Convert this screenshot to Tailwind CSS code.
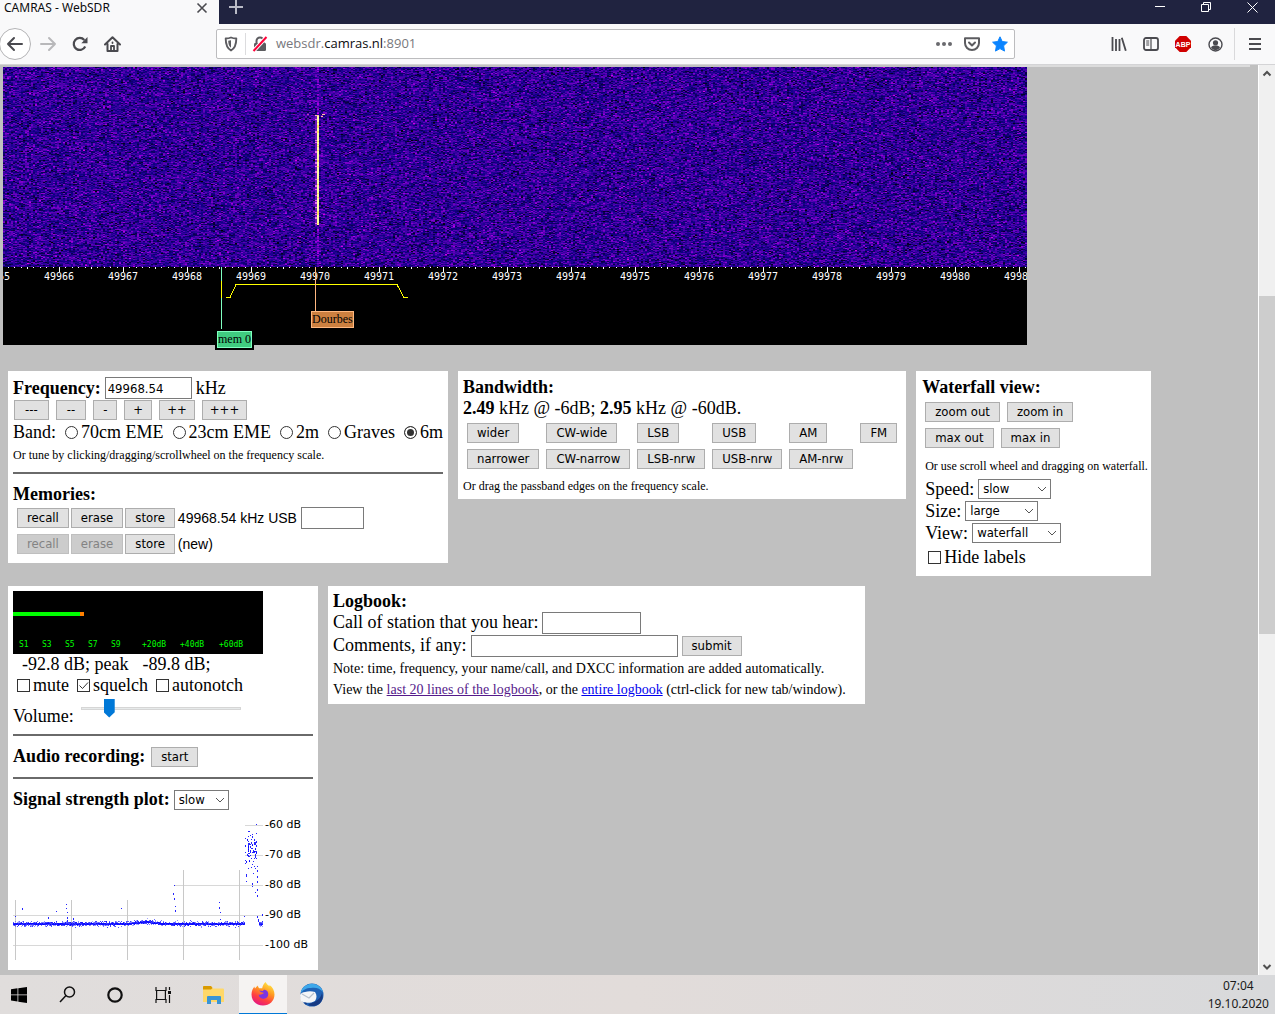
<!DOCTYPE html>
<html lang="en">
<head>
  <meta charset="UTF-8" />
  <title>CAMRAS - WebSDR</title>
  <meta name="viewport" content="width=device-width,initial-scale=1" />
  <script src="https://cdn.jsdelivr.net/npm/@tailwindcss/browser@4"></script>
</head>

<body class="h-screen flex flex-col overflow-hidden bg-[#c0c0c0] text-black
             font-['Open_Sans','Noto_Sans',sans-serif]">

  <!-- tab strip -->
  <header class="h-6 shrink-0 flex bg-[#202340] text-xs">
    <div class="w-[219px] bg-[#f9f9fa] flex items-center justify-between pl-1 pr-[11px] pb-2">
      <span class="text-[#0c0c0d] font-['Noto_Sans',sans-serif]">CAMRAS - WebSDR</span>
      <button aria-label="Close tab">
        <svg width="12" height="12" viewBox="0 0 12 12" fill="none" stroke="#4a4a4f" stroke-width="1.6"><path d="M1.5 1.5l9 9M10.5 1.5l-9 9"/></svg>
      </button>
    </div>
    <button class="w-[34px] flex justify-center" aria-label="New tab">
      <svg width="14" height="14" viewBox="0 0 14 14" stroke="#b9bac6" stroke-width="2"><path d="M7 0v14M0 7h14"/></svg>
    </button>
    <div class="ml-auto flex pb-[10px] text-white">
      <button class="w-[46px] flex items-center justify-center" aria-label="Minimize">
        <svg width="10" height="10" stroke="currentColor"><path d="M0 4.5h10"/></svg>
      </button>
      <button class="w-[46px] flex items-center justify-center" aria-label="Restore">
        <svg width="10" height="10" fill="none" stroke="currentColor"><path d="M.5 2.5h7v7h-7zM2.5 2.500v-2h7v7h-2"/></svg>
      </button>
      <button class="w-[46px] flex items-center justify-center" aria-label="Close">
        <svg width="11" height="11" stroke="currentColor"><path d="M.5.5l10 10M10.500.5l-10 10"/></svg>
      </button>
    </div>
  </header>

  <!-- toolbar -->
  <nav class="h-[41px] shrink-0 flex items-center bg-[#f9f9fa] border-b border-[#d4d4d6] text-[#4a4a4f]">
    <button class="w-8 h-8 -ml-px mr-px rounded-full border border-[#b4b4b6] bg-white flex items-center justify-center" aria-label="Back">
      <svg width="18" height="16" viewBox="0 0 18 16" fill="none" stroke="currentColor" stroke-width="2" stroke-linecap="round" stroke-linejoin="round"><path d="M2 8h14M8 2L2 8l6 6"/></svg>
    </button>
    <button class="w-8 flex justify-center text-[#b8b8ba]" aria-label="Forward">
      <svg width="18" height="16" viewBox="0 0 18 16" fill="none" stroke="currentColor" stroke-width="2" stroke-linecap="round" stroke-linejoin="round"><path d="M2 8h14M10 2l6 6-6 6"/></svg>
    </button>
    <button class="w-8 flex justify-center" aria-label="Reload">
      <svg width="16" height="16" viewBox="0 0 16 16"><path d="M13.200 10.500A6 6 0 1 1 12.300 4" fill="none" stroke="currentColor" stroke-width="2.200"/><path d="M15.500 1v6.200H9.300z" fill="currentColor"/></svg>
    </button>
    <button class="w-8 flex justify-center" aria-label="Home">
      <svg width="17" height="16" viewBox="0 0 17 16" fill="none" stroke="currentColor" stroke-width="2" stroke-linejoin="round" stroke-linecap="round"><path d="M1 8.500L8.500 1.200 16 8.500M3.500 8v7h10V8"/><path d="M7 14.500V10h3v4.500M8.500 6.500v.5" stroke-width="1.800"/></svg>
    </button>

    <div class="flex-1 h-[30px] mx-[88px] flex items-center bg-white border border-[#bcbcbe] rounded-[2px] pl-[6px]">
      <button aria-label="Tracking protection" class="w-4">
        <svg width="16" height="16" viewBox="0 0 16 16"><path d="M8 1.500c2 .9 3.800 1 5.300 1 0 5-.8 9.500-5.300 12C3.500 12 2.700 7.500 2.700 2.500c1.500 0 3.300-.1 5.300-1z" fill="none" stroke="#5c5c60" stroke-width="1.900" stroke-linejoin="round"/><path d="M8 4.200v7.600C6 10.300 5.300 7.800 5.200 4.700 6.200 4.700 7 4.500 8 4.200z" fill="#5c5c60"/></svg>
      </button>
      <span class="w-px h-[22px] bg-[#dcdcde] mx-[6px]"></span>
      <button aria-label="Connection not secure" class="w-4">
        <svg width="16" height="16" viewBox="0 0 16 16"><path d="M4.500 7V5a3.500 3.500 0 0 1 7 0v2" fill="none" stroke="#5c5c60" stroke-width="2"/><rect x="2" y="7" width="12" height="8" rx="1.200" fill="#5c5c60"/><path d="M1.500 15L14.500 1" stroke="#fff" stroke-width="4"/><path d="M1.500 15L14.500 1" stroke="#ff0039" stroke-width="2"/></svg>
      </button>
      <span class="ml-2 flex-1 text-[13px] text-[#78787d]">websdr.<span class="text-[#0c0c0d]">camras.nl</span>:8901</span>
      <button aria-label="Page actions" class="w-7 flex justify-center">
        <svg width="16" height="4" fill="#6a6a6e"><circle cx="2" cy="2" r="2"/><circle cx="8" cy="2" r="2"/><circle cx="14" cy="2" r="2"/></svg>
      </button>
      <button aria-label="Save to Pocket" class="w-7 flex justify-center">
        <svg width="16" height="16" viewBox="0 0 16 16" fill="none" stroke="#5c5c60" stroke-width="2" stroke-linecap="round" stroke-linejoin="round"><path d="M1 2.200h14V7a7 7 0 0 1-14 0z"/><path d="M5 6.500l3 3 3-3"/></svg>
      </button>
      <button aria-label="Bookmark" class="w-7 flex justify-center">
        <svg width="16" height="16" viewBox="0 0 16 16" fill="#0a84ff" stroke="#0a84ff" stroke-linejoin="round"><path d="M8 .8l2.200 4.700 5.200.7-3.800 3.600.9 5.300L8 12.600l-4.500 2.500.9-5.300L.6 6.200l5.200-.7z"/></svg>
      </button>
    </div>

    <button class="w-8 flex justify-center" aria-label="Library">
      <svg width="16" height="14" viewBox="0 0 16 14" fill="none" stroke="currentColor" stroke-width="1.800"><path d="M1.500 0v14M5 2v12M8.500 2v12M10.800.8l4 13"/></svg>
    </button>
    <button class="w-8 flex justify-center" aria-label="Sidebars">
      <svg width="16" height="14" viewBox="0 0 16 14" fill="none" stroke="currentColor" stroke-width="1.800"><rect x="1" y="1" width="14" height="12" rx="2"/><path d="M8 1v12" stroke-width="1.200"/><path d="M3.200 4h3M3.200 6h3M3.200 8h3" stroke-width="1"/></svg>
    </button>
    <button class="w-8 flex justify-center" aria-label="Adblock Plus">
      <svg width="16" height="16" viewBox="0 0 16 16"><path d="M4.700 0h6.600L16 4.700v6.600L11.300 16H4.700L0 11.300V4.700z" fill="#d00000"/><text x="8" y="10.800" text-anchor="middle" font-family="Liberation Sans" font-size="7" font-weight="bold" fill="#fff">ABP</text></svg>
    </button>
    <button class="w-8 flex justify-center" aria-label="Account">
      <svg width="15" height="15" viewBox="0 0 15 15" fill="none" stroke="currentColor"><circle cx="7.500" cy="7.500" r="6.500" stroke-width="1.400"/><circle cx="7.500" cy="5.800" r="2.600" fill="currentColor" stroke="none"/><path d="M3 10.800c.8-1.800 2-2.200 4.500-2.200s3.700.4 4.500 2.200A5.500 5.500 0 0 1 3 10.800z" fill="currentColor" stroke="none"/></svg>
    </button>
    <button class="ml-[3px] w-[41px] h-8 border-l border-[#d9d9db] flex items-center justify-center" aria-label="Menu">
      <svg width="12" height="12" stroke="currentColor" stroke-width="2"><path d="M0 1h12M0 6h12M0 11h12"/></svg>
    </button>
  </nav>

  <div class="flex-1 min-h-0 flex">
    <main class="flex-1 min-w-0 overflow-hidden font-['Liberation_Serif',serif] text-lg leading-[21px]">
      <div class="h-[2px] flex"><span class="ml-auto mr-2 w-[279px] bg-[#dcdcdc]"></span></div>

      <!-- waterfall and frequency scale -->
      <section class="relative ml-[3px] w-[1024px] bg-black">
        <canvas id="waterfall" width="1024" height="200" class="block"></canvas>
        <svg width="1024" height="78" class="block" shape-rendering="crispEdges">
          <defs>
            <pattern id="ticks" x="56" y="0" width="64" height="6" patternUnits="userSpaceOnUse">
              <path d="M0 0h1v5h-1zM6 0h1v1h-1zM13 0h1v1h-1zM19 0h1v1h-1zM26 0h1v1h-1zM32 0h1v2h-1zM38 0h1v1h-1zM45 0h1v1h-1zM51 0h1v1h-1zM58 0h1v1h-1z" fill="#fff"/>
            </pattern>
          </defs>
          <rect width="1024" height="6" fill="url(#ticks)"/>
          <g fill="#fff" font-family="DejaVu Sans Mono" font-size="10" text-anchor="middle">
            <text x="-8" y="13">49965</text><text x="56" y="13">49966</text>
            <text x="120" y="13">49967</text><text x="184" y="13">49968</text>
            <text x="248" y="13">49969</text><text x="312" y="13">49970</text>
            <text x="376" y="13">49971</text><text x="440" y="13">49972</text>
            <text x="504" y="13">49973</text><text x="568" y="13">49974</text>
            <text x="632" y="13">49975</text><text x="696" y="13">49976</text>
            <text x="760" y="13">49977</text><text x="824" y="13">49978</text>
            <text x="888" y="13">49979</text><text x="952" y="13">49980</text>
            <text x="1016" y="13">49981</text>
          </g>
          <path d="M218.500 0v64" stroke="#80ffc0"/>
          <path d="M218.500 14v17M223 30.500h4l6-13h161l7 13h4" fill="none" stroke="#ff0"/>
          <path d="M312.500 0v44" stroke="#ffb880"/>
        </svg>
        <span class="absolute left-[308px] top-[244px] border border-[#ffb880] bg-[#cc8040] text-xs leading-[15px]">Dourbes</span>
        <span class="absolute left-[214px] top-[264px] border border-[#80ffc0] bg-[#40cc80] outline-2 outline-black text-xs leading-[15px]">mem 0</span>
      </section>

      <div class="mt-[26px] px-2 flex items-start gap-[10px]">
        <!-- frequency and memories -->
        <section class="bg-white px-[5px] pt-[5px] pb-2">
          <div class="h-6 flex items-center gap-1">
            <label for="freq" class="font-bold">Frequency:</label>
            <input id="freq" value="49968.54" class="w-[87px] h-[22px] border border-[#7a7a7a] px-[2px] font-['DejaVu_Sans_Condensed','Noto_Sans',sans-serif] text-[13px]" />
            <span>kHz</span>
          </div>
          <div class="flex gap-[7px] pl-px font-['DejaVu_Sans_Condensed','Noto_Sans',sans-serif] text-[13px] leading-[18px]">
            <button class="border border-[#adadad] bg-[#e1e1e1] px-[10px]">---</button>
            <button class="border border-[#adadad] bg-[#e1e1e1] px-[10px]">--</button>
            <button class="border border-[#adadad] bg-[#e1e1e1] px-[9px]">-</button>
            <button class="border border-[#adadad] bg-[#e1e1e1] px-2">+</button>
            <button class="border border-[#adadad] bg-[#e1e1e1] px-[7px]">++</button>
            <button class="border border-[#adadad] bg-[#e1e1e1] px-[7px]">+++</button>
          </div>
          <div class="h-6 flex items-center gap-[9px]">
            <span>Band:</span>
            <label class="flex items-center gap-[3px]"><input type="radio" name="band" class="appearance-none size-[13px] rounded-full border border-[#333] checked:bg-[#333] checked:shadow-[inset_0_0_0_2px_white]" />70cm EME</label>
            <label class="flex items-center gap-[3px]"><input type="radio" name="band" class="appearance-none size-[13px] rounded-full border border-[#333] checked:bg-[#333] checked:shadow-[inset_0_0_0_2px_white]" />23cm EME</label>
            <label class="flex items-center gap-[3px]"><input type="radio" name="band" class="appearance-none size-[13px] rounded-full border border-[#333] checked:bg-[#333] checked:shadow-[inset_0_0_0_2px_white]" />2m</label>
            <label class="flex items-center gap-[3px]"><input type="radio" name="band" class="appearance-none size-[13px] rounded-full border border-[#333] checked:bg-[#333] checked:shadow-[inset_0_0_0_2px_white]" />Graves</label>
            <label class="flex items-center gap-[3px]"><input type="radio" name="band" checked class="appearance-none size-[13px] rounded-full border border-[#333] checked:bg-[#333] checked:shadow-[inset_0_0_0_2px_white]" />6m</label>
          </div>
          <p class="text-xs leading-[22px]">Or tune by clicking/dragging/scrollwheel on the frequency scale.</p>
          <hr class="mt-[6px] mb-2 border-t-2 border-[#6a6a6a]" />
          <h2 class="font-bold leading-[25px]">Memories:</h2>
          <div class="pl-1 grid grid-cols-[auto_auto_auto_1fr] gap-x-[2px] gap-y-1 items-center font-['DejaVu_Sans_Condensed','Noto_Sans',sans-serif] text-[13px] leading-[18px]">
            <button class="border border-[#adadad] bg-[#e1e1e1] px-[9px]">recall</button>
            <button class="border border-[#adadad] bg-[#e1e1e1] px-[9px]">erase</button>
            <button class="border border-[#adadad] bg-[#e1e1e1] px-[9px]">store</button>
            <label class="h-[22px] pl-px flex items-center gap-1 font-['Liberation_Sans',sans-serif] text-sm">49968.54 kHz USB
              <input class="w-[63px] h-[22px] border border-[#7a7a7a] px-[2px]" /></label>
            <button disabled class="border border-[#bfbfbf] bg-[#ccc] text-[#838383] px-[9px]">recall</button>
            <button disabled class="border border-[#bfbfbf] bg-[#ccc] text-[#838383] px-[9px]">erase</button>
            <button class="border border-[#adadad] bg-[#e1e1e1] px-[9px]">store</button>
            <span class="pl-px font-['Liberation_Sans',sans-serif] text-sm leading-[22px]">(new)</span>
          </div>
        </section>

        <!-- bandwidth -->
        <section class="bg-white px-[5px] pt-[6px] pb-[2px]">
          <h2 class="font-bold">Bandwidth:</h2>
          <p><b>2.49</b> kHz @ -6dB; <b>2.95</b> kHz @ -60dB.</p>
          <div class="mt-1 px-1 grid grid-cols-[repeat(6,auto)] justify-items-start gap-x-[7px] gap-y-[6px] font-['DejaVu_Sans_Condensed','Noto_Sans',sans-serif] text-[13px] leading-[18px]">
            <button class="border border-[#adadad] bg-[#e1e1e1] px-[9px]">wider</button>
            <button class="border border-[#adadad] bg-[#e1e1e1] px-[9px]">CW-wide</button>
            <button class="border border-[#adadad] bg-[#e1e1e1] px-[9px]">LSB</button>
            <button class="border border-[#adadad] bg-[#e1e1e1] px-[9px]">USB</button>
            <button class="border border-[#adadad] bg-[#e1e1e1] px-[9px]">AM</button>
            <button class="border border-[#adadad] bg-[#e1e1e1] px-[9px]">FM</button>
            <button class="border border-[#adadad] bg-[#e1e1e1] px-[9px]">narrower</button>
            <button class="border border-[#adadad] bg-[#e1e1e1] px-[9px]">CW-narrow</button>
            <button class="border border-[#adadad] bg-[#e1e1e1] px-[9px]">LSB-nrw</button>
            <button class="border border-[#adadad] bg-[#e1e1e1] px-[9px]">USB-nrw</button>
            <button class="border border-[#adadad] bg-[#e1e1e1] px-[9px]">AM-nrw</button>
          </div>
          <p class="mt-[6px] text-xs leading-[22px]">Or drag the passband edges on the frequency scale.</p>
        </section>

        <!-- waterfall view -->
        <section class="bg-white pl-[6px] pr-[3px] pt-[6px] pb-2">
          <h2 class="font-bold">Waterfall view:</h2>
          <div class="pl-[3px]">
            <div class="mt-1 flex gap-[7px] font-['DejaVu_Sans_Condensed','Noto_Sans',sans-serif] text-[13px] leading-[18px]">
              <button class="border border-[#adadad] bg-[#e1e1e1] px-[9px]">zoom out</button>
              <button class="border border-[#adadad] bg-[#e1e1e1] px-[9px]">zoom in</button>
            </div>
            <div class="mt-[6px] flex gap-[7px] font-['DejaVu_Sans_Condensed','Noto_Sans',sans-serif] text-[13px] leading-[18px]">
              <button class="border border-[#adadad] bg-[#e1e1e1] px-[9px]">max out</button>
              <button class="border border-[#adadad] bg-[#e1e1e1] px-[9px]">max in</button>
            </div>
            <p class="mt-[7px] text-xs leading-[22px]">Or use scroll wheel and dragging on waterfall.</p>
            <div class="mt-px flex items-center gap-1 h-[22px]">
              <label for="speed">Speed:</label>
              <span class="grid items-center">
                <select id="speed" class="col-start-1 row-start-1 appearance-none w-[73px] h-5 bg-white border border-[#7a7a7a] pl-1 font-['DejaVu_Sans_Condensed','Noto_Sans',sans-serif] text-[13px] leading-[18px]"><option>slow</option><option>fast</option></select>
                <svg width="10" height="6" fill="none" stroke="#555" class="col-start-1 row-start-1 justify-self-end mr-1 pointer-events-none"><path d="M1 1l4 4 4-4"/></svg>
              </span>
            </div>
            <div class="flex items-center gap-1 h-[22px]">
              <label for="size">Size:</label>
              <span class="grid items-center">
                <select id="size" class="col-start-1 row-start-1 appearance-none w-[73px] h-5 bg-white border border-[#7a7a7a] pl-1 font-['DejaVu_Sans_Condensed','Noto_Sans',sans-serif] text-[13px] leading-[18px]"><option>large</option><option>small</option></select>
                <svg width="10" height="6" fill="none" stroke="#555" class="col-start-1 row-start-1 justify-self-end mr-1 pointer-events-none"><path d="M1 1l4 4 4-4"/></svg>
              </span>
            </div>
            <div class="flex items-center gap-1 h-[22px]">
              <label for="view">View:</label>
              <span class="grid items-center">
                <select id="view" class="col-start-1 row-start-1 appearance-none w-[89px] h-5 bg-white border border-[#7a7a7a] pl-1 font-['DejaVu_Sans_Condensed','Noto_Sans',sans-serif] text-[13px] leading-[18px]"><option>waterfall</option><option>spectrum</option></select>
                <svg width="10" height="6" fill="none" stroke="#555" class="col-start-1 row-start-1 justify-self-end mr-1 pointer-events-none"><path d="M1 1l4 4 4-4"/></svg>
              </span>
            </div>
            <label class="mt-[2px] pl-[3px] h-[22px] flex items-center gap-[3px]"><input type="checkbox" class="appearance-none size-[13px] border border-[#333]" />Hide labels</label>
          </div>
        </section>
      </div>

      <div class="mt-[10px] px-2 flex items-start gap-[10px]">
        <!-- s-meter, audio and signal plot -->
        <section class="bg-white p-[5px] pb-[10px]">
          <svg width="250" height="63" class="block bg-black" shape-rendering="crispEdges">
            <path d="M0 21h67v4H0z" fill="#0f0"/><path d="M67 21h4v4h-4z" fill="#ff8000"/>
            <g fill="#0f0" font-family="DejaVu Sans Mono" font-size="8">
              <text x="6" y="56">S1</text><text x="29" y="56">S3</text><text x="52" y="56">S5</text>
              <text x="75" y="56">S7</text><text x="98" y="56">S9</text><text x="129" y="56">+20dB</text>
              <text x="167" y="56">+40dB</text><text x="206" y="56">+60dB</text>
            </g>
          </svg>
          <p class="flex gap-[14px] pl-[9px]"><span>-92.8 dB; peak</span><span>-89.8 dB;</span></p>
          <div class="pl-1 flex items-center gap-2">
            <label class="flex items-center gap-[3px]"><input type="checkbox" class="appearance-none size-[13px] border border-[#333]" />mute</label>
            <label class="flex items-center gap-[3px]">
              <span class="grid">
                <input type="checkbox" checked class="peer col-start-1 row-start-1 appearance-none size-[13px] border border-[#333]" />
                <svg width="13" height="13" fill="none" stroke="#333" class="col-start-1 row-start-1 invisible peer-checked:visible pointer-events-none"><path d="M2.500 6.500l3 3 5.500-6"/></svg>
              </span>squelch</label>
            <label class="flex items-center gap-[3px]"><input type="checkbox" class="appearance-none size-[13px] border border-[#333]" />autonotch</label>
          </div>
          <div class="mt-px flex items-start gap-[7px]">
            <label for="volume" class="pt-[9px]">Volume:</label>
            <input id="volume" type="range" min="0" max="100" value="15"
                   class="appearance-none w-40 h-[22px] bg-transparent
                          [&::-webkit-slider-runnable-track]:h-[3px] [&::-webkit-slider-runnable-track]:border [&::-webkit-slider-runnable-track]:border-[#d6d6d6] [&::-webkit-slider-runnable-track]:bg-[#e7eaea]
                          [&::-webkit-slider-thumb]:appearance-none [&::-webkit-slider-thumb]:w-[11px] [&::-webkit-slider-thumb]:h-[19px] [&::-webkit-slider-thumb]:-mt-[9px] [&::-webkit-slider-thumb]:bg-[#0078d7]
                          [&::-webkit-slider-thumb]:[clip-path:polygon(0_0,100%_0,100%_72%,50%_100%,0_72%)]" />
          </div>
          <hr class="mt-[7px] mb-[10px] border-t-2 border-[#6a6a6a]" />
          <div class="flex items-center gap-[6px]">
            <span class="font-bold">Audio recording:</span>
            <button class="border border-[#adadad] bg-[#e1e1e1] px-[9px] font-['DejaVu_Sans_Condensed','Noto_Sans',sans-serif] text-[13px] leading-[18px]">start</button>
          </div>
          <hr class="my-[10px] border-t-2 border-[#6a6a6a]" />
          <div class="flex items-center gap-1">
            <label for="plotspeed" class="font-bold">Signal strength plot:</label>
            <span class="grid items-center">
              <select id="plotspeed" class="col-start-1 row-start-1 appearance-none w-[55px] h-5 bg-white border border-[#7a7a7a] pl-1 font-['DejaVu_Sans_Condensed','Noto_Sans',sans-serif] text-[13px] leading-[18px]"><option>slow</option><option>fast</option></select>
              <svg width="10" height="6" fill="none" stroke="#555" class="col-start-1 row-start-1 justify-self-end mr-1 pointer-events-none"><path d="M1 1l4 4 4-4"/></svg>
            </span>
          </div>
          <div class="flex gap-[2px]">
            <canvas id="plot" width="250" height="150" class="block"></canvas>
            <div class="w-12 font-['DejaVu_Sans',sans-serif] text-[11px] leading-[30px]">
              <p>-60 dB</p><p>-70 dB</p><p>-80 dB</p><p>-90 dB</p><p>-100 dB</p>
            </div>
          </div>
        </section>

        <!-- logbook -->
        <section class="bg-white pl-[5px] pr-[19px] pt-[5px] pb-1">
          <h2 class="font-bold leading-5">Logbook:</h2>
          <div class="h-[23px] flex items-center gap-1">
            <label for="call">Call of station that you hear:</label>
            <input id="call" class="w-[99px] h-[22px] border border-[#7a7a7a] px-[2px]" />
          </div>
          <div class="h-[23px] flex items-center gap-1">
            <label for="comment">Comments, if any:</label>
            <input id="comment" class="w-[207px] h-[22px] border border-[#7a7a7a] px-[2px]" />
            <button class="border border-[#adadad] bg-[#e1e1e1] px-[9px] font-['DejaVu_Sans_Condensed','Noto_Sans',sans-serif] text-[13px] leading-[18px]">submit</button>
          </div>
          <p class="mt-px text-sm leading-[21px]">Note: time, frequency, your name/call, and DXCC information are added automatically.</p>
          <p class="text-sm leading-[21px]">View the <a href="#" class="underline text-[#551a8b]">last 20 lines of the logbook</a>, or the <a href="#" class="underline text-[#0000ee]">entire logbook</a> (ctrl-click for new tab/window).</p>
        </section>
      </div>
    </main>

    <!-- scrollbar -->
    <aside class="w-[17px] shrink-0 flex flex-col items-center bg-[#f0f0f0] border-l border-white">
      <svg width="16" height="17" fill="none" stroke="#505050" stroke-width="2"><path d="M4.500 10.500L8 7l3.500 3.500"/></svg>
      <div class="flex-1 w-full pt-[214px]"><div class="h-[338px] bg-[#cdcdcd]"></div></div>
      <svg width="16" height="17" fill="none" stroke="#505050" stroke-width="2"><path d="M4.500 7L8 10.500 11.500 7"/></svg>
    </aside>
  </div>

  <!-- taskbar -->
  <footer class="h-[39px] shrink-0 flex bg-linear-to-r from-[#e0dddc] via-[#e2dcda] to-[#d8d9db]">
    <button class="w-[43px] pr-[5px] flex items-center justify-center" aria-label="Start">
      <svg width="16" height="16" viewBox="0 0 16 16"><path d="M0 2.200l6.500-.9v6.200H0zM7.300 1.200L16 0v7.500H7.300zM0 8.300h6.500v6.200L0 13.600zM7.300 8.300H16V16l-8.700-1.200z"/></svg>
    </button>
    <button class="w-12 flex items-center justify-center" aria-label="Search">
      <svg width="17" height="17" fill="none" stroke="#111" stroke-width="1.500"><circle cx="10.500" cy="6" r="5"/><path d="M7 9.500L1 16"/></svg>
    </button>
    <button class="w-12 flex items-center justify-center" aria-label="Cortana">
      <svg width="16" height="16" fill="none" stroke="#111" stroke-width="2.200"><circle cx="8" cy="8" r="6.700"/></svg>
    </button>
    <button class="w-12 flex items-center justify-center" aria-label="Task view">
      <svg width="17" height="16" fill="none" stroke="#111" stroke-width="1.200"><path d="M1 0v3.500h10V0M1 16v-3.500h10V16M1.600 3.500v9M10.400 3.500v9M14.500 0v3M14.500 8v8"/><path d="M13 4h3v3h-3z" fill="#111" stroke="none"/></svg>
    </button>
    <button class="w-[52px] flex items-center justify-center" aria-label="File Explorer">
      <svg width="21" height="18" viewBox="0 0 21 18"><path d="M0 1q0-1 1-1h7l2 2.500h10q1 0 1 1V16H0z" fill="#ffd869"/><path d="M0 1q0-1 1-1h7l1.500 2L8 3.500H0z" fill="#d99a00"/><path d="M4 18v-7q0-1 1-1h12q1 0 1 1v7h-4v-4H8v4z" fill="#3a94d4"/></svg>
    </button>
    <button class="w-12 flex items-center justify-center bg-[#f5f3f2] border-b border-[#0078d7]" aria-label="Firefox">
      <svg width="24" height="24" viewBox="0 0 24 24">
        <defs><linearGradient id="fx" x1="0.800" y1="0" x2="0.300" y2="1"><stop offset="0" stop-color="#fff04a"/><stop offset="0.400" stop-color="#ff9820"/><stop offset="0.700" stop-color="#ff4040"/><stop offset="1" stop-color="#e31587"/></linearGradient></defs>
        <path d="M14.500 0c1 2 2.500 3 3.800 4.300.3-.6.300-1 .2-1.400C21.500 5 23.500 8.500 23.500 12.500 23.500 19 18.500 23.500 12 23.500S.5 19 .5 12.500C.5 9 2 6 3.500 4.500c0 1 .2 1.500.5 2 1-1.500 2-2.500 3-3 0 1 .3 2 1.200 2.700 1 0 2-.2 3 .1C11.500 4 13 1.500 14.500 0z" fill="url(#fx)"/>
        <path d="M8 8.500c2 .2 3 .5 4 .5.500-1.500 2-1.500 3.500-.5 1.700 1.200 2.200 3.500 1.400 5.500-1 2.400-3.700 3.200-6 2.400-2-.7-3.300-2.300-3.200-4 1.300.6 2.400.5 3.500-.4 1.200-.4 1.600-.8 1.300-1.300-1.500 0-3-.4-4.500-2.200z" fill="#7a35e0"/>
      </svg>
    </button>
    <button class="w-12 flex items-center justify-center" aria-label="Thunderbird">
      <svg width="25" height="24" viewBox="0 0 25 24">
        <circle cx="13" cy="12" r="11.500" fill="#1f62b5"/><path d="M8 2C14-1 22 2 24 9c-3-4-8-5-12-4C7 5 4 7 2 10 2 6 5 3 8 2z" fill="#3ea8ea"/>
        <path d="M1 12c1-2 3-3 5-3 3-1 7-1 10 0 2 3 2 6 0 9-3 2-8 2-11 1.500L2 18z" fill="#f4f6f8"/><path d="M3 11l7 4 5-5" fill="none" stroke="#b6c0cc" stroke-width="1.200"/>
        <path d="M5 19l3 1-1 2zM17 18c-3 2-6 2-8 4 5 2 10 1 13-3 2-3 2-6 1-9-1 4-3 6-6 8z" fill="#173a82"/>
      </svg>
    </button>
    <div class="ml-auto pr-[6px] pt-[2px] text-center text-xs leading-[18px] text-[#1a1a1a] font-['Noto_Sans',sans-serif]">
      <p>07:04</p>
      <p>19.10.2020</p>
    </div>
  </footer>

<script>
// small seeded generator, so the noise is the same on each load
let seed = 49968;
function rnd() {
  seed = (seed * 1664525 + 1013904223) >>> 0;
  return seed / 4294967296;
}
function gauss() { return rnd() + rnd() + rnd() + rnd() - 2; }

// waterfall: noise bins are 2px wide and 1px high
const wf = document.getElementById('waterfall').getContext('2d');
for (let y = 0; y < 200; y++) {
  for (let x = 0; x < 1024; x += 2) {
    let v = 0.54 + gauss() * 0.32;
    if (x === 314) v += 0.25;
    v = Math.max(0, Math.min(1.25, v));
    let r, b;
    if (v < 0.45) { r = v * 40; b = v * 310; }
    else { r = 20 + (v - 0.45) * 250; b = 140 + (v - 0.45) * 150; }
    if (rnd() < 0.0006) { r = 210; b = 230; }
    wf.fillStyle = 'rgb(' + (r | 0) + ',0,' + (b | 0) + ')';
    wf.fillRect(x, y, 2, 1);
  }
}
// carrier
for (let y = 48; y < 158; y++) {
  wf.fillStyle = rnd() < 0.8 ? '#6a18b8' : '#e070e8';
  wf.fillRect(312, y, 2, 1);
  wf.fillStyle = rnd() < 0.8 ? '#ffffa0' : '#ffe060';
  wf.fillRect(314, y, 2, 1);
}
wf.fillStyle = '#ffc0a0';
wf.fillRect(312, 48, 4, 1);
wf.fillRect(319, 47, 3, 1);
wf.fillRect(318, 49, 2, 1);
wf.fillStyle = '#c040c0';
wf.fillRect(304, 47, 2, 1);

// signal strength plot
const pl = document.getElementById('plot').getContext('2d');
pl.fillStyle = '#d8d8d8';
pl.fillRect(232, 15, 18, 1);
pl.fillRect(232, 45, 18, 1);
pl.fillRect(161, 75, 89, 1);
pl.fillRect(0, 105, 250, 1);
pl.fillRect(0, 135, 250, 1);
pl.fillStyle = '#c8c8c8';
[[2, 90], [58, 90], [114, 90], [170, 60], [226, 60]].forEach(([x, y]) => pl.fillRect(x, y, 1, 150 - y));
pl.fillStyle = '#0000ff';
for (let x = 0; x < 250; x++) {
  if (x >= 232 && x < 246) continue;
  const mid = 113 - 2 * Math.exp(-Math.pow((x - 133) / 12, 2));
  for (let i = 0; i < 5; i++) {
    pl.globalAlpha = 0.3 + rnd() * 0.5;
    pl.fillRect(x, Math.round(mid + 0.5 + gauss() * 2), 1, 1);
  }
  pl.globalAlpha = 0.75;
  pl.fillRect(x, Math.round(mid), 1, 2);
}
pl.globalAlpha = 0.85;
for (let i = 0; i < 80; i++) {
  pl.fillRect(232 + (rnd() * 12 | 0), Math.round(39 + gauss() * 17), 1, rnd() < 0.4 ? 2 : 1);
}
[[9, 98], [2, 106], [43, 101], [35, 107], [53, 94], [53, 98], [54, 102], [54, 107], [54, 110], [60, 108],
 [108, 98], [161, 75], [160, 83], [161, 88], [162, 96], [162, 100], [206, 92], [206, 97], [207, 102],
 [207, 109], [231, 106], [233, 66], [233, 71], [239, 73], [239, 76], [242, 82], [244, 56], [244, 60],
 [244, 66], [244, 71], [244, 79], [244, 85], [244, 106], [249, 104], [240, 63], [245, 109], [245, 111]]
  .forEach(([x, y]) => pl.fillRect(x, y, 1, rnd() < 0.5 ? 2 : 1));
</script>
</body>
</html>
